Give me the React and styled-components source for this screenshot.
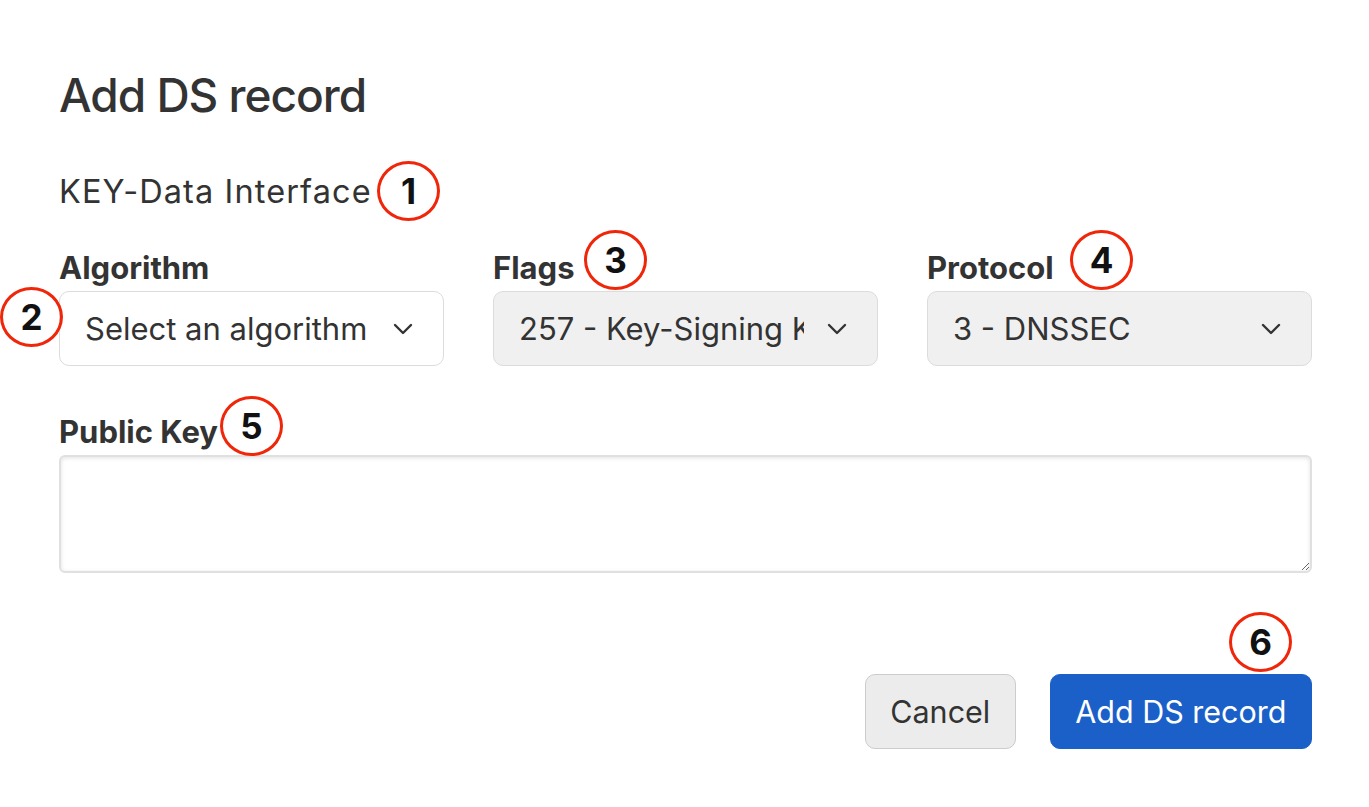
import React from "react";
import styled, { createGlobalStyle } from "styled-components";

const Global = createGlobalStyle`
  html, body { margin: 0; padding: 0; background: #ffffff; }
  body { font-family: Inter, "Liberation Sans", Arial, sans-serif; color: #333333; }
  * { box-sizing: border-box; }
`;

const Page = styled.div`
  position: relative;
  width: 1369px;
  min-height: 807px;
  padding: 67px 57px 0 59px;
`;

const Title = styled.h1`
  margin: 0;
  font-size: 46px;
  line-height: 56px;
  font-weight: 500;
  letter-spacing: -1px;
  color: #333333;
`;

const Subtitle = styled.div`
  margin-top: 49px;
  font-size: 32.5px;
  line-height: 40px;
  font-weight: 400;
  letter-spacing: 1.1px;
  color: #333333;
`;

const FieldsRow = styled.div`
  margin-top: 37px;
  display: grid;
  grid-template-columns: repeat(3, minmax(0, 1fr));
  column-gap: 49px;
`;

const Field = styled.div`
  display: flex;
  flex-direction: column;
  gap: 4px;
  min-width: 0;
  margin-top: ${(p) => p.$top || 0}px;
`;

const Label = styled.label`
  font-size: 31px;
  line-height: 38px;
  font-weight: 700;
  color: #333333;
`;

const SelectBox = styled.div`
  height: 75px;
  display: flex;
  align-items: center;
  gap: 23px;
  padding: 0 30px 0 25px;
  border: 1.5px solid #dcdcdc;
  border-radius: 10px;
  background: ${(p) => (p.$disabled ? "#f0f0f0" : "#ffffff")};
`;

const SelectValue = styled.span`
  flex: 1;
  min-width: 0;
  overflow: hidden;
  white-space: nowrap;
  font-size: 31px;
  color: #333333;
`;

const TextArea = styled.textarea`
  display: block;
  width: 100%;
  height: 118px;
  border: 2px solid #e0e0e0;
  border-radius: 6px;
  box-shadow: inset 0 1px 4px rgba(0, 0, 0, 0.12);
  background: #ffffff;
  font-family: inherit;
  font-size: 28px;
  padding: 10px 14px;
  outline: none;
`;

const Actions = styled.div`
  margin-top: 101px;
  display: flex;
  justify-content: flex-end;
  gap: 34px;
`;

const Button = styled.button`
  height: 75px;
  padding: 0 24.5px;
  border-radius: 10px;
  font-family: inherit;
  font-size: 30.5px;
  font-weight: 400;
  border: 1.5px solid ${(p) => (p.$primary ? "#1b5fc8" : "#cccccc")};
  background: ${(p) => (p.$primary ? "#1b5fc8" : "#ececec")};
  color: ${(p) => (p.$primary ? "#ffffff" : "#333333")};
  cursor: pointer;
`;

const Marker = styled.span`
  position: absolute;
  left: ${(p) => p.$x}px;
  top: ${(p) => p.$y}px;
  width: 63px;
  height: 60px;
  border: 3px solid #f0260a;
  border-radius: 50%;
  display: flex;
  align-items: center;
  justify-content: center;
  font-family: Inter, "Liberation Sans", Arial, sans-serif;
  font-size: 35px;
  font-weight: 700;
  color: #111111;
`;

const Chevron = () => (
  <svg width="20" height="12" viewBox="0 0 20 12" fill="none">
    <path d="M2 2 L10 10 L18 2" stroke="#333" strokeWidth="2.4" strokeLinecap="round" strokeLinejoin="round" />
  </svg>
);

const Select = ({ value, disabled }) => (
  <SelectBox $disabled={disabled}>
    <SelectValue>{value}</SelectValue>
    <Chevron />
  </SelectBox>
);

export default function App() {
  return (
    <>
      <Global />
      <Page>
        <Title>Add DS record</Title>
        <Subtitle>KEY-Data Interface</Subtitle>
        <FieldsRow>
          <Field>
            <Label>Algorithm</Label>
            <Select value="Select an algorithm" />
          </Field>
          <Field>
            <Label>Flags</Label>
            <Select value="257 - Key-Signing Key (KSK)" disabled />
          </Field>
          <Field>
            <Label>Protocol</Label>
            <Select value="3 - DNSSEC" disabled />
          </Field>
        </FieldsRow>
        <Field $top={47}>
          <Label>Public Key</Label>
          <TextArea />
        </Field>
        <Actions>
          <Button>Cancel</Button>
          <Button $primary>Add DS record</Button>
        </Actions>
        <Marker $x={377} $y={161}>1</Marker>
        <Marker $x={0} $y={287}>2</Marker>
        <Marker $x={584} $y={230}>3</Marker>
        <Marker $x={1070} $y={230}>4</Marker>
        <Marker $x={220} $y={396}>5</Marker>
        <Marker $x={1229} $y={612}>6</Marker>
      </Page>
    </>
  );
}
